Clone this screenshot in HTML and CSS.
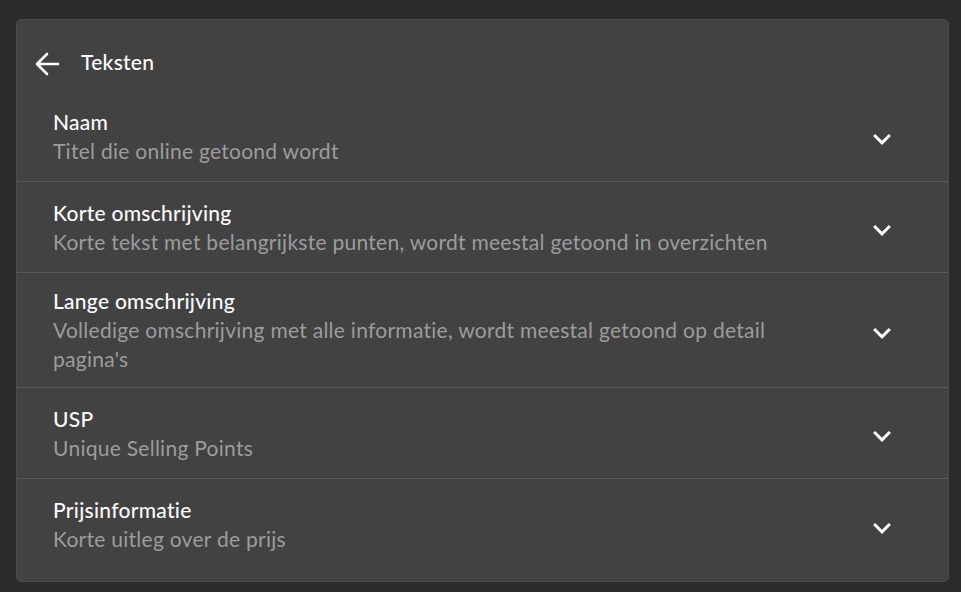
FILE: index.html
```html
<!DOCTYPE html>
<html lang="nl">
<head>
<meta charset="utf-8">
<title>Teksten</title>
<link rel="stylesheet" href="styles.css">
</head>
<body>
<div class="card">
  <div class="header">
    <svg class="back" width="26" height="26" viewBox="0 0 26 26" aria-hidden="true">
      <path d="M24 13H3.5M13 3L3 13l10 10" fill="none" stroke="#fff" stroke-width="2.6" stroke-linecap="round" stroke-linejoin="round"/>
    </svg>
    <span class="header-title">Teksten</span>
  </div>
  <ul class="list">
    <li class="row">
      <div class="text">
        <div class="title">Naam</div>
        <div class="sub">Titel die online getoond wordt</div>
      </div>
      <svg class="chev" width="18" height="11" viewBox="6 8.59 12 7.41" aria-hidden="true"><path d="M16.59 8.59L12 13.17 7.41 8.59 6 10l6 6 6-6z" fill="#fff"/></svg>
    </li>
    <li class="row">
      <div class="text">
        <div class="title">Korte omschrijving</div>
        <div class="sub">Korte tekst met belangrijkste punten, wordt meestal getoond in overzichten</div>
      </div>
      <svg class="chev" width="18" height="11" viewBox="6 8.59 12 7.41" aria-hidden="true"><path d="M16.59 8.59L12 13.17 7.41 8.59 6 10l6 6 6-6z" fill="#fff"/></svg>
    </li>
    <li class="row">
      <div class="text">
        <div class="title">Lange omschrijving</div>
        <div class="sub">Volledige omschrijving met alle informatie, wordt meestal getoond op detail pagina's</div>
      </div>
      <svg class="chev" width="18" height="11" viewBox="6 8.59 12 7.41" aria-hidden="true"><path d="M16.59 8.59L12 13.17 7.41 8.59 6 10l6 6 6-6z" fill="#fff"/></svg>
    </li>
    <li class="row">
      <div class="text">
        <div class="title">USP</div>
        <div class="sub">Unique Selling Points</div>
      </div>
      <svg class="chev" width="18" height="11" viewBox="6 8.59 12 7.41" aria-hidden="true"><path d="M16.59 8.59L12 13.17 7.41 8.59 6 10l6 6 6-6z" fill="#fff"/></svg>
    </li>
    <li class="row">
      <div class="text">
        <div class="title">Prijsinformatie</div>
        <div class="sub">Korte uitleg over de prijs</div>
      </div>
      <svg class="chev" width="18" height="11" viewBox="6 8.59 12 7.41" aria-hidden="true"><path d="M16.59 8.59L12 13.17 7.41 8.59 6 10l6 6 6-6z" fill="#fff"/></svg>
    </li>
  </ul>
</div>
</body>
</html>
```
FILE: styles.css
```css
html, body {
  margin: 0;
  padding: 0;
  background: #2b2b2b;
}
body {
  padding: 19px 12px 11px 16px;
  font-family: Lato, "Noto Sans", sans-serif;
  color: #fff;
  letter-spacing: 0.27px;
}
.card {
  box-sizing: border-box;
  width: 933px;
  height: 563px;
  background: #424242;
  border: 1px solid #4b4b4b;
  border-radius: 5px;
  overflow: hidden;
}
.header {
  display: flex;
  align-items: center;
  height: 28px;
  padding: 28px 0 15px 17px;
}
.back {
  display: block;
  margin-top: 4px;
}
.header-title {
  margin-left: 21px;
  font-size: 21px;
  font-weight: 500;
  line-height: 28px;
}
.list {
  list-style: none;
  margin: 0;
  padding: 0;
}
.row {
  box-sizing: border-box;
  display: flex;
  align-items: center;
  min-height: 91px;
  padding: 14px 0 14px 36px;
  border-bottom: 1px solid #595959;
}
.row:last-child {
  border-bottom: none;
}
.text {
  flex: 0 0 770px;
}
.title {
  font-size: 21px;
  font-weight: 500;
  line-height: 28px;
  color: #fafafa;
}
.sub {
  font-size: 21px;
  line-height: 29px;
  color: #9c9c9c;
}
.chev {
  display: block;
  margin: 7px 0 0 50px;
}
```
